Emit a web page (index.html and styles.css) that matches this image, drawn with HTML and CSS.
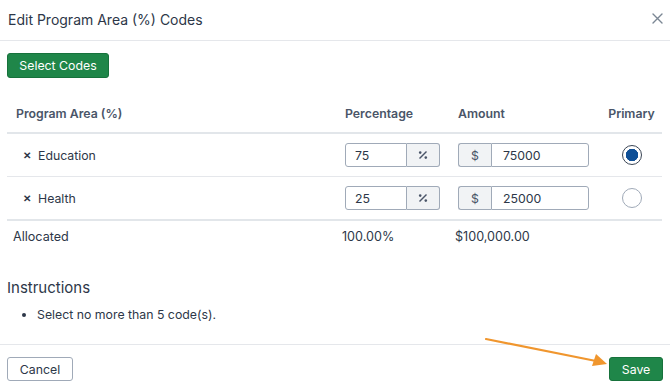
FILE: index.html
```html
<!DOCTYPE html>
<html lang="en">
<head>
    <meta charset="UTF-8" />
    <meta name="viewport" content="width=device-width, initial-scale=1" />
    <title>Edit Program Area (%) Codes</title>
    <link rel="stylesheet" href="styles.css">
</head>
<body>
    <div class="modal">
        <!-- Header -->
        <div class="modal-header">
            <h1 class="modal-title">Edit Program Area (%) Codes</h1>
            <button class="close-btn" aria-label="Close">
                <svg width="11" height="11" viewBox="0 0 11 11"><path d="M1 1 L10 10 M10 1 L1 10" stroke="#7b8794" stroke-width="1.4" fill="none" stroke-linecap="round"/></svg>
            </button>
        </div>

        <div class="modal-body">
            <button class="btn btn-green btn-select">Select Codes</button>

            <table class="codes-table">
                <colgroup>
                    <col class="col-name" />
                    <col class="col-pct" />
                    <col class="col-amt" />
                    <col class="col-primary" />
                </colgroup>
                <thead>
                    <tr>
                        <th class="name">Program Area (%)</th>
                        <th>Percentage</th>
                        <th>Amount</th>
                        <th class="primary">Primary</th>
                    </tr>
                </thead>
                <tbody>
                    <tr>
                        <td class="name"><span class="remove">&#x2715;</span>Education</td>
                        <td>
                            <div class="input-group">
                                <input class="field pct" type="text" value="75" />
                                <span class="addon addon-right">
                                    <svg width="10" height="10" viewBox="0 0 10 10"><circle cx="2.2" cy="2.6" r="1.3" fill="#4a5568"/><circle cx="7.8" cy="7.6" r="1.3" fill="#4a5568"/><path d="M8.5 1.5 L1.5 8.5" stroke="#4a5568" stroke-width="1.4"/></svg>
                                </span>
                            </div>
                        </td>
                        <td>
                            <div class="input-group">
                                <span class="addon addon-left">$</span>
                                <input class="field amt" type="text" value="75000" />
                            </div>
                        </td>
                        <td class="primary"><span class="radio checked"></span></td>
                    </tr>
                    <tr class="last">
                        <td class="name"><span class="remove">&#x2715;</span>Health</td>
                        <td>
                            <div class="input-group">
                                <input class="field pct" type="text" value="25" />
                                <span class="addon addon-right">
                                    <svg width="10" height="10" viewBox="0 0 10 10"><circle cx="2.2" cy="2.6" r="1.3" fill="#4a5568"/><circle cx="7.8" cy="7.6" r="1.3" fill="#4a5568"/><path d="M8.5 1.5 L1.5 8.5" stroke="#4a5568" stroke-width="1.4"/></svg>
                                </span>
                            </div>
                        </td>
                        <td>
                            <div class="input-group">
                                <span class="addon addon-left">$</span>
                                <input class="field amt" type="text" value="25000" />
                            </div>
                        </td>
                        <td class="primary"><span class="radio"></span></td>
                    </tr>
                </tbody>
                <tfoot>
                    <tr>
                        <td class="name">Allocated</td>
                        <td>100.00%</td>
                        <td>$100,000.00</td>
                        <td></td>
                    </tr>
                </tfoot>
            </table>

            <!-- Instructions -->
            <h2 class="instructions-title">Instructions</h2>
            <ul class="instructions">
                <li>Select no more than 5 code(s).</li>
            </ul>
        </div>

        <div class="modal-footer">
            <button class="btn btn-white">Cancel</button>
            <button class="btn btn-green btn-save">Save</button>
        </div>

        <!-- annotation arrow -->
        <svg class="arrow" width="670" height="389" viewBox="0 0 670 389">
            <path d="M486 339 L596 361" stroke="#f0962e" stroke-width="2.2" fill="none" stroke-linecap="round"/>
            <path d="M607 364 L592 366 L596 354 Z" fill="#f0962e"/>
        </svg>
    </div>
</body>
</html>
```

FILE: styles.css
```css
body {
    margin: 0;
    background-color: #fff;
    font-family: Inter, "Noto Sans", Arial, sans-serif;
    color: #2d3748;
    font-size: 12.3px;
}
.modal {
    position: relative;
    width: 670px;
    height: 389px;
    overflow: hidden;
}
.modal-header {
    height: 41px;
    padding: 0 7px 0 8px;
    border-bottom: 1px solid #e5e7eb;
    display: flex;
    align-items: center;
    justify-content: space-between;
    box-sizing: border-box;
}
.modal-title {
    margin: 0;
    font-size: 14px;
    font-weight: 400;
    color: #2d3748;
    padding-bottom: 2px;
}
.close-btn {
    background: none;
    border: none;
    padding: 0;
    margin: 0 0 4px 0;
    width: 11px;
    height: 11px;
    display: flex;
}
.modal-body {
    padding: 12px 8px 0 7px;
    height: 303px;
    box-sizing: border-box;
}
.btn {
    font-family: inherit;
    font-size: 12.3px;
    height: 24px;
    border-radius: 3px;
    padding: 0;
    cursor: pointer;
    white-space: nowrap;
    box-sizing: border-box;
    display: block;
}
.btn-green {
    background-color: #1f8649;
    border: 1px solid #17723c;
    color: #fff;
}
.btn-select {
    width: 102px;
    height: 25px;
}
.btn-white {
    background-color: #fff;
    border: 1px solid #a0aab8;
    color: #2d3748;
    width: 66px;
}
.btn-save {
    width: 54px;
}
.codes-table {
    margin-top: 17px;
    width: 655px;
    border-collapse: collapse;
    table-layout: fixed;
}
.col-name { width: 331px; }
.col-pct { width: 113px; }
.col-amt { width: 150px; }
.col-primary { width: 61px; }
.codes-table th {
    height: 37px;
    padding: 0 0 0 7px;
    text-align: left;
    font-weight: 600;
    color: #4a5568;
    border-bottom: 2px solid #e2e6ea;
    vertical-align: middle;
}
.codes-table th.name {
    padding-left: 9px;
}
.codes-table th.primary,
.codes-table td.primary {
    text-align: center;
    padding: 0;
}
.codes-table tbody td {
    height: 42px;
    padding: 0 0 0 7px;
    border-bottom: 1px solid #e5e7eb;
    vertical-align: middle;
}
.codes-table tbody tr.last td {
    border-bottom: 2px solid #e2e6ea;
}
.codes-table tbody td.name {
    padding-left: 16px;
}
.remove {
    font-size: 10px;
    font-weight: 700;
    margin-right: 7px;
    color: #2d3748;
    position: relative;
    top: -1px;
}
.codes-table tfoot td {
    height: 30px;
    padding: 0 0 0 4px;
    vertical-align: middle;
    font-size: 12.6px;
}
.codes-table tfoot td.name {
    padding-left: 6px;
}
.input-group {
    display: flex;
    height: 24px;
}
.field {
    font-family: inherit;
    font-size: 12.3px;
    color: #2d3748;
    border: 1px solid #a0aab8;
    height: 24px;
    box-sizing: border-box;
    padding: 0 9px;
    margin: 0;
    outline: none;
}
.field.pct {
    width: 62px;
    border-radius: 3px 0 0 3px;
}
.field.amt {
    width: 98px;
    border-radius: 0 3px 3px 0;
    padding-left: 11px;
}
.addon {
    background-color: #f1f3f5;
    border: 1px solid #a0aab8;
    height: 24px;
    box-sizing: border-box;
    display: flex;
    align-items: center;
    justify-content: center;
    color: #4a5568;
    font-size: 12.3px;
}
.addon-right {
    width: 33px;
    border-left: none;
    border-radius: 0 3px 3px 0;
}
.addon-left {
    width: 33px;
    border-right: none;
    border-radius: 3px 0 0 3px;
}
.radio {
    display: inline-block;
    width: 20px;
    height: 20px;
    border-radius: 50%;
    border: 1px solid #a0aab8;
    box-sizing: border-box;
    vertical-align: middle;
    background: #fff;
}
.radio.checked {
    border: 1.5px solid #3a4555;
    background: radial-gradient(circle, #0f4f96 0 6px, #fff 6.5px);
}
.instructions-title {
    margin: 27px 0 0 0;
    font-size: 15px;
    font-weight: 400;
    line-height: 20px;
    color: #2d3748;
}
.instructions {
    margin: 7px 0 0 0;
    padding-left: 30px;
    line-height: 20px;
}
.modal-footer {
    border-top: 1px solid #e5e7eb;
    padding: 12px 7px 0 7px;
    display: flex;
    justify-content: space-between;
}
.arrow {
    position: absolute;
    left: 0;
    top: 0;
    pointer-events: none;
}
```
